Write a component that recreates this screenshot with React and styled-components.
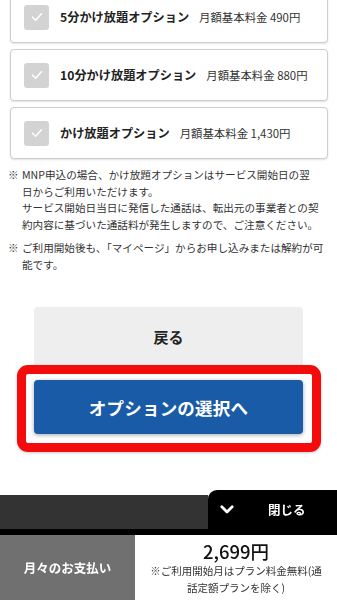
import React from 'react';
import styled, { createGlobalStyle } from 'styled-components';

const options = [
    { title: '5分かけ放題オプション', price: '月額基本料金 490円' },
    { title: '10分かけ放題オプション', price: '月額基本料金 880円' },
    { title: 'かけ放題オプション', price: '月額基本料金 1,430円' },
];

const notes = [
    [
        'MNP申込の場合、かけ放題オプションはサービス開始日の翌',
        '日からご利用いただけます。',
        'サービス開始日当日に発信した通話は、転出元の事業者との契',
        '約内容に基づいた通話料が発生しますので、ご注意ください。',
    ],
    [
        'ご利用開始後も、「マイページ」からお申し込みまたは解約が可',
        '能です。',
    ],
];

function CheckIcon () {
    return (
        <svg width="12" height="10" viewBox="0 0 12 10">
            <path d="M1.5 5.2 L4.6 8.2 L10.5 1.8" fill="none" stroke="#fff" strokeWidth="1.6" strokeLinecap="round" strokeLinejoin="round" />
        </svg>
    );
}

function Chevron () {
    return (
        <svg width="14" height="9" viewBox="0 0 14 9">
            <path d="M1.8 1.8 L7 7 L12.2 1.8" fill="none" stroke="#fff" strokeWidth="2.8" strokeLinecap="round" strokeLinejoin="round" />
        </svg>
    );
}

function App () {
    return (
        <Page>
            <GlobalStyle />
            <OptionList>
                {options.map(o => (
                    <OptionCard key={o.title}>
                        <CheckBox><CheckIcon /></CheckBox>
                        <OptionTitle>{o.title}</OptionTitle>
                        <OptionPrice>{o.price}</OptionPrice>
                    </OptionCard>
                ))}
            </OptionList>

            <Notes>
                {notes.map((lines, i) => (
                    <Note key={i}>
                        <Mark>※</Mark>
                        <NoteText>
                            {lines.map(l => <Line key={l}>{l}</Line>)}
                        </NoteText>
                    </Note>
                ))}
            </Notes>

            <BackButton>戻る</BackButton>
            <Highlight>
                <PrimaryButton>オプションの選択へ</PrimaryButton>
            </Highlight>

            <Footer>
                <FooterTop>
                    <DarkBar />
                    <CloseTab>
                        <Chevron />
                        <CloseLabel>閉じる</CloseLabel>
                    </CloseTab>
                </FooterTop>
                <Divider />
                <PayRow>
                    <PayLabel>月々のお支払い</PayLabel>
                    <PayInfo>
                        <PayAmount>2,699円</PayAmount>
                        <PayNote>※ご利用開始月はプラン料金無料(通話定額プランを除く)</PayNote>
                    </PayInfo>
                </PayRow>
            </Footer>
        </Page>
    );
}

export default App;

const GlobalStyle = createGlobalStyle`
    html, body {
        margin: 0;
        padding: 0;
        background: #fff;
        font-family: "Noto Sans CJK JP", "Noto Sans", sans-serif;
        color: #222;
        overflow: hidden;
    }
`

const Page = styled.div`
    width: 337px;
    height: 600px;
    overflow: hidden;
`

const OptionList = styled.div`
    display: flex;
    flex-direction: column;
    gap: 6px;
    margin: -9px 9px 0 10px;
`

const OptionCard = styled.div`
    height: 52px;
    box-sizing: border-box;
    display: flex;
    align-items: center;
    padding-left: 13px;
    border: 1.5px solid #cdcdcd;
    border-radius: 4px;
    box-shadow: 0 1px 2px rgba(0, 0, 0, 0.12);
    background: #fff;
`

const CheckBox = styled.div`
    width: 25px;
    height: 25px;
    flex-shrink: 0;
    border-radius: 3px;
    background: #d3d3d3;
    display: flex;
    align-items: center;
    justify-content: center;
    margin-right: 11px;
`

const OptionTitle = styled.span`
    font-size: 12.2px;
    font-weight: 700;
    color: #222;
    margin-right: 10px;
    white-space: nowrap;
`

const OptionPrice = styled.span`
    font-size: 11.4px;
    color: #333;
    white-space: nowrap;
`

const Notes = styled.div`
    margin: 8px 0 0 8px;
    display: flex;
    flex-direction: column;
    gap: 7px;
    font-size: 10.6px;
    line-height: 16.5px;
    color: #333;
`

const Note = styled.div`
    display: flex;
`

const Mark = styled.span`
    width: 14px;
    flex-shrink: 0;
`

const NoteText = styled.div`
    display: flex;
    flex-direction: column;
    font-feature-settings: "palt" 0;
`

const Line = styled.span`
    white-space: nowrap;
`

const BackButton = styled.div`
    margin: 34px 34px 0 34px;
    height: 58px;
    background: #eeeeee;
    border-radius: 4px 4px 0 0;
    display: flex;
    align-items: center;
    justify-content: center;
    font-size: 15px;
    font-weight: 700;
    color: #222;
`

const Highlight = styled.div`
    margin: 0 16px 0 17px;
    border: 9px solid #f40c0c;
    border-radius: 11px;
    padding: 6px 9px 9px 8px;
    background: #fff;
    box-shadow: 0 1px 3px rgba(0, 0, 0, 0.2);
`

const PrimaryButton = styled.div`
    height: 54px;
    border-radius: 4px;
    background: #1a5ba8;
    box-shadow: 0 1px 4px rgba(0, 0, 0, 0.35);
    color: #fff;
    font-size: 17.5px;
    font-weight: 700;
    display: flex;
    align-items: center;
    justify-content: center;
    letter-spacing: 0.2px;
`

const Footer = styled.div`
    position: fixed;
    left: 0;
    right: 0;
    bottom: 0;
    height: 110px;
    display: flex;
    flex-direction: column;
`

const FooterTop = styled.div`
    height: 39px;
    display: flex;
`

const DarkBar = styled.div`
    flex: 1;
    margin-top: 5px;
    background: #333333;
`

const CloseTab = styled.div`
    width: 129px;
    background: #000;
    border-top-left-radius: 9px;
    display: flex;
    align-items: center;
    padding-left: 12px;
    box-sizing: border-box;
    color: #fff;
`

const CloseLabel = styled.span`
    margin-left: 34px;
    font-size: 12.5px;
    font-weight: 700;
`

const Divider = styled.div`
    height: 6px;
    background: #000;
`

const PayRow = styled.div`
    flex: 1;
    display: flex;
`

const PayLabel = styled.div`
    width: 135px;
    background: #707070;
    color: #fff;
    font-size: 12.5px;
    font-weight: 700;
    display: flex;
    align-items: center;
    justify-content: center;
`

const PayInfo = styled.div`
    flex: 1;
    background: #fff;
    display: flex;
    flex-direction: column;
    align-items: center;
    padding: 5px 10px 0 10px;
    text-align: center;
`

const PayAmount = styled.div`
    font-size: 18.5px;
    font-weight: 500;
    line-height: 22px;
    color: #111;
`

const PayNote = styled.div`
    font-size: 10.5px;
    line-height: 17px;
    color: #333;
`
